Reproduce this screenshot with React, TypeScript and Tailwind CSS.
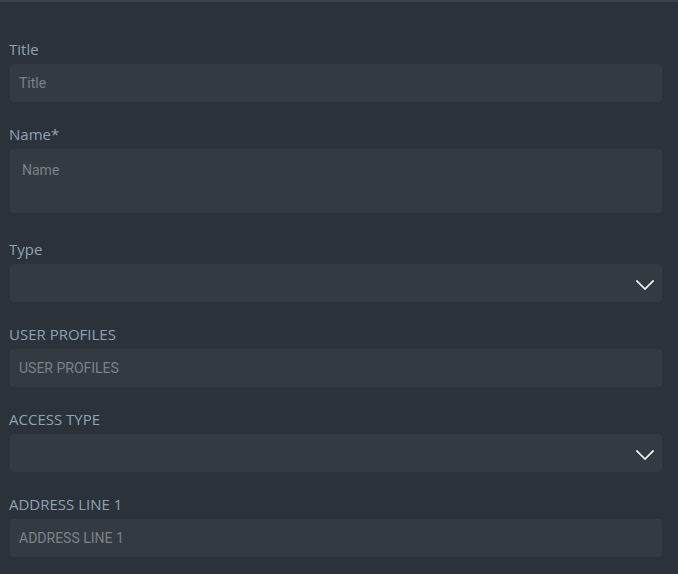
import { ReactNode } from "react";

function Chevron() {
  return (
    <svg width="18" height="10" viewBox="0 0 18 10" fill="none" className="mt-[4px] shrink-0">
      <path d="M1 1l8 8 8-8" stroke="#ffffff" strokeWidth="1.6" strokeLinecap="square" />
    </svg>
  );
}

function Field({ label, children, extra = "mb-[22px]" }: { label: string; children: ReactNode; extra?: string }) {
  return (
    <div className={`flex flex-col ${extra}`}>
      <label className="mb-[5px] pl-[9px] text-[15px] leading-5 text-[#8ea4b6] [font-family:'Open_Sans',sans-serif]">
        {label}
      </label>
      {children}
    </div>
  );
}

function TextInput({ placeholder }: { placeholder: string }) {
  return (
    <input
      placeholder={placeholder}
      className="ml-[10px] h-[38px] w-[652px] rounded bg-[#343a42] px-[9px] text-[14px] text-[#d0d4d8] outline-none placeholder:text-[#7c8188] [font-family:Roboto,sans-serif]"
    />
  );
}

function SelectBox() {
  return (
    <div className="ml-[10px] flex h-[38px] w-[652px] items-center justify-end rounded bg-[#343a42] pr-[8px]">
      <Chevron />
    </div>
  );
}

export default function App() {
  return (
    <div className="min-h-[574px] w-full border-t-2 border-[#3b4148] bg-[#2c323a] pt-[37px]">
      <Field label="Title">
        <TextInput placeholder="Title" />
      </Field>
      <Field label="Name*" extra="mb-[26px]">
        <textarea
          placeholder="Name"
          className="ml-[10px] block h-[64px] w-[652px] resize-none rounded bg-[#343a42] px-[12px] pt-[11px] text-[14px] leading-5 text-[#d0d4d8] outline-none placeholder:text-[#7c8188] [font-family:Roboto,sans-serif]"
        />
      </Field>
      <Field label="Type">
        <SelectBox />
      </Field>
      <Field label="USER PROFILES">
        <TextInput placeholder="USER PROFILES" />
      </Field>
      <Field label="ACCESS TYPE">
        <SelectBox />
      </Field>
      <Field label="ADDRESS LINE 1">
        <TextInput placeholder="ADDRESS LINE 1" />
      </Field>
    </div>
  );
}
